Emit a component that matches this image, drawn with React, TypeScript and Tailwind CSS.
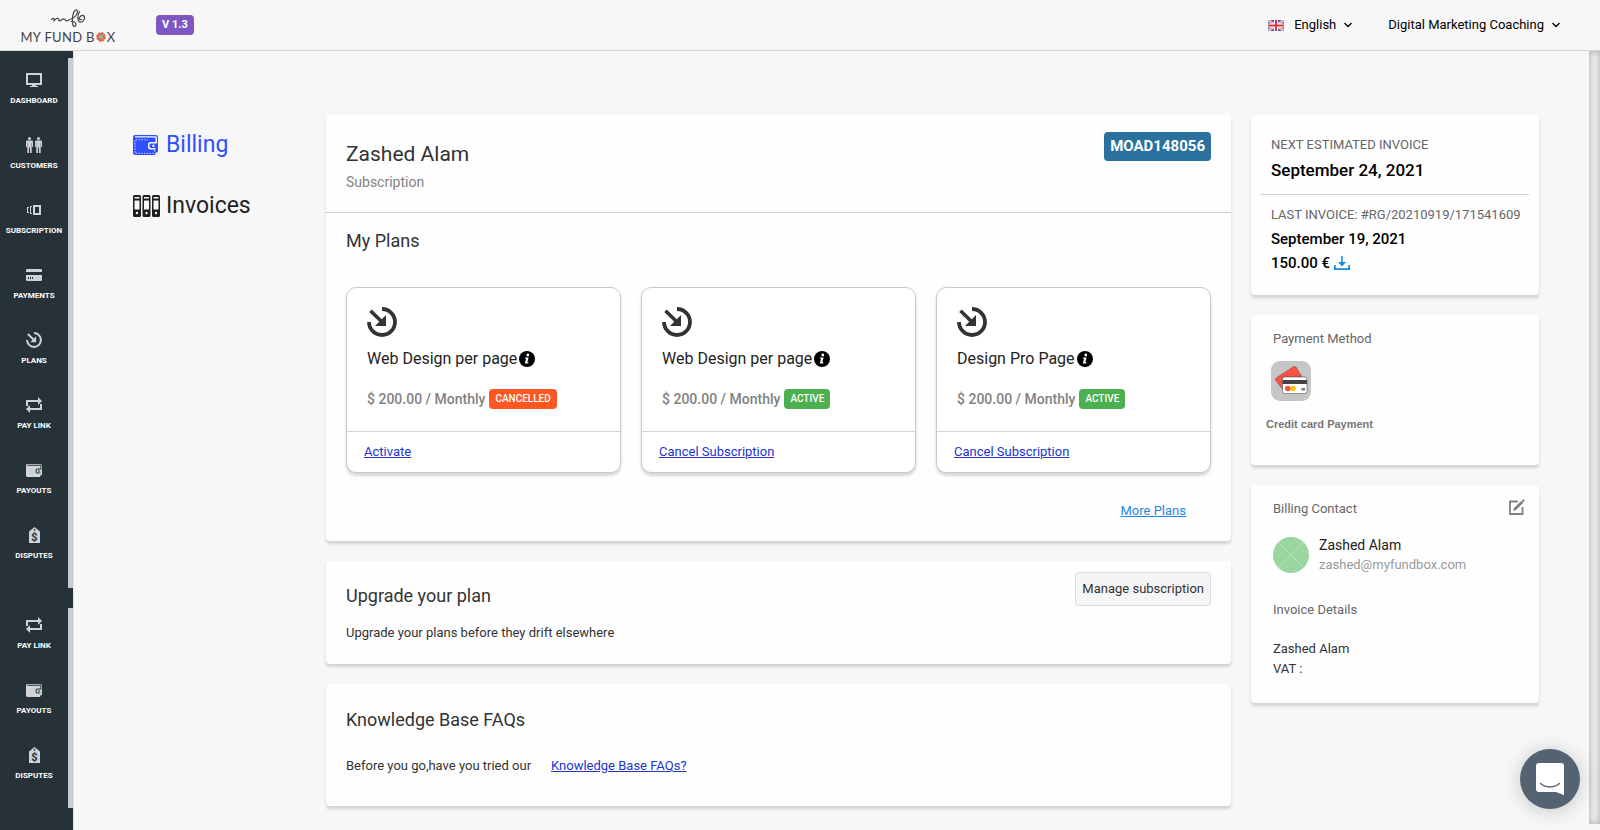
import type { ReactNode } from "react";
import clsx from "clsx";

type IconProps = { className?: string };

function MonitorIcon({ className }: IconProps) {
  return (
    <svg viewBox="0 0 16 14" className={className} fill="currentColor" aria-hidden="true">
      <path fillRule="evenodd" d="M0 0h16v12h-6v1h2v1H4v-1h2v-1H0V0Zm2 2v8h12V2H2Z" />
    </svg>
  );
}

function PeopleIcon({ className }: IconProps) {
  return (
    <svg viewBox="0 0 16 16" className={className} fill="currentColor" aria-hidden="true">
      <circle cx="3.5" cy="1.5" r="1.5" />
      <circle cx="12.5" cy="1.5" r="1.5" />
      <path d="M1.200 3.600h4.600A1.200 1.200 0 0 1 7 4.800V10H6V6h-.3v10H4v-5.500H3V16H1.300V6H1v4H0V4.800a1.200 1.200 0 0 1 1.200-1.200Z" />
      <path d="M10.200 3.600h4.600A1.200 1.200 0 0 1 16 4.800V10h-1V6h-.3v10H13v-5.500h-1V16h-1.700V6H10v4H9V4.800a1.200 1.200 0 0 1 1.200-1.200Z" />
    </svg>
  );
}

function StackIcon({ className }: IconProps) {
  return (
    <svg viewBox="0 0 14 10" className={className} fill="currentColor" aria-hidden="true">
      <path fillRule="evenodd" d="M6 0h8v10H6V0Zm2 2v6h4V2H8Z" />
      <path d="M3 1h2v1H4v6h1v1H3V1ZM0 2h2v1H1v4h1v1H0V2Z" />
    </svg>
  );
}

function CardIcon({ className }: IconProps) {
  return (
    <svg viewBox="0 0 16 12" className={className} fill="currentColor" aria-hidden="true">
      <path d="M1.200 0h13.600A1.200 1.200 0 0 1 16 1.200V3H0V1.200A1.200 1.200 0 0 1 1.200 0Z" />
      <path
        fillRule="evenodd"
        d="M0 6h16v4.800a1.200 1.200 0 0 1-1.200 1.200H1.200A1.200 1.200 0 0 1 0 10.800V6Zm2 2v2h1V8H2Zm2 0v2h1V8H4Zm2 0v2h1V8H6Z"
      />
    </svg>
  );
}

function PlanIcon({ className }: IconProps) {
  return (
    <svg viewBox="0 0 30 30" className={className} aria-hidden="true">
      <path d="M15 2a13 13 0 1 1-13 13" fill="none" stroke="currentColor" strokeWidth="3.800" />
      <path d="M3.500 3.700 14 14" fill="none" stroke="currentColor" strokeWidth="3.600" />
      <path d="M19 8v11H8L19 8Z" fill="currentColor" />
    </svg>
  );
}

function LoopIcon({ className }: IconProps) {
  return (
    <svg viewBox="0 0 16 16" className={className} fill="currentColor" aria-hidden="true">
      <path d="M0 9V3h12V0l4 4-4 4V5H2v4H0Z" />
      <path d="M16 7v6H4v3l-4-4 4-4v3h10V7h2Z" />
    </svg>
  );
}

function WalletIcon({ className }: IconProps) {
  return (
    <svg viewBox="0 0 25 20" className={className} aria-hidden="true">
      <path
        fill="currentColor"
        fillRule="evenodd"
        d="M2 0h20.500A2.500 2.500 0 0 1 25 2.500V16a1.500 1.500 0 0 1-1.500 1.500H22.500v1A1.500 1.500 0 0 1 21 20H2a2 2 0 0 1-2-2V2a2 2 0 0 1 2-2Zm0 1.200v1.300h20.500V7H24V2.700a1.500 1.500 0 0 0-1.500-1.500H2Zm15.500 5.800a2.500 2.500 0 0 0-2.500 2.500v2.500a2.500 2.500 0 0 0 2.500 2.500h5v-1.500h-4.600a1.400 1.400 0 0 1-1.400-1.400V9.900a1.400 1.400 0 0 1 1.400-1.400H24V7h-6.500Zm1.800 2.800v2h2.200v-2h-2.200Z"
      />
      <path
        d="M2 5v13.300h19M3 4.800h12M21.500 15v2.500"
        fill="none"
        stroke="white"
        strokeOpacity=".75"
        strokeWidth="1"
        strokeDasharray="1.500 1.300"
      />
    </svg>
  );
}

function BindersIcon({ className }: IconProps) {
  return (
    <svg viewBox="0 0 27 22" className={className} fill="currentColor" aria-hidden="true">
      {[0, 9.5, 19].map((x) => (
        <path
          key={x}
          transform={`translate(${x} 0)`}
          fillRule="evenodd"
          d="M1.500 0h5A1.500 1.500 0 0 1 8 1.500v19A1.500 1.500 0 0 1 6.500 22h-5A1.500 1.500 0 0 1 0 20.500v-19A1.500 1.500 0 0 1 1.500 0ZM1.500 2v1.500h5V2h-5ZM1.500 5.500v9h5v-9h-5ZM4 16.800a1.200 1.200 0 1 0 0 2.400 1.200 1.200 0 0 0 0-2.400Z"
        />
      ))}
    </svg>
  );
}

function TagIcon({ className }: IconProps) {
  return (
    <svg viewBox="0 0 11 16" className={className} aria-hidden="true">
      <path fill="currentColor" fillRule="evenodd" d="M5.500 0 11 4.500V16H0V4.500L5.500 0Zm0 1.800a.9.9 0 1 0 0 1.800.9.9 0 0 0 0-1.800Z" />
      <text x="5.500" y="14" textAnchor="middle" fontSize="11" fontWeight="700" fill="#263238" fontFamily="Roboto, sans-serif">
        $
      </text>
    </svg>
  );
}

function InfoIcon({ className }: IconProps) {
  return (
    <svg viewBox="0 0 16 16" className={className} aria-hidden="true">
      <circle cx="8" cy="8" r="8" fill="black" />
      <circle cx="8.800" cy="4" r="1.400" fill="white" />
      <path d="M6 6.400h3.600L8.300 11.300h1.200l-.3 1.200H5.800L7.100 7.600H5.700L6 6.400Z" fill="white" />
    </svg>
  );
}

function DownloadIcon({ className }: IconProps) {
  return (
    <svg viewBox="0 0 16 14" className={className} fill="currentColor" aria-hidden="true">
      <path d="M7.200 0h1.600v6H12l-4 4.500L4 6h3.200V0Z" />
      <path d="M0 9h1.700v3.300h12.600V9H16v5H0V9Z" />
    </svg>
  );
}

function EditIcon({ className }: IconProps) {
  return (
    <svg viewBox="0 0 16 16" className={className} aria-hidden="true">
      <path d="M9 2.500H1V15h12.500V8" fill="none" stroke="currentColor" strokeWidth="1.800" />
      <path d="M14 0 16 2 14.800 3.200l-2-2L14 0ZM12.300 1.700l2 2-7.300 7.300-3 1 1-3 7.300-7.300Z" fill="currentColor" />
    </svg>
  );
}

function ChevronIcon() {
  return (
    <svg viewBox="0 0 8 6" className="h-1.5 w-2" fill="none" stroke="currentColor" strokeWidth="1.300" aria-hidden="true">
      <path d="M.5 1 4 4.500 7.500 1" />
    </svg>
  );
}

function FlagIcon() {
  return (
    <svg viewBox="0 0 16 11" className="h-[11px] w-4" aria-hidden="true">
      <rect width="16" height="11" fill="#4058a8" />
      <path d="M0 0 16 11M16 0 0 11" stroke="#f5e9ee" strokeWidth="2.400" />
      <path d="M0 0 16 11M16 0 0 11" stroke="#e0696f" strokeWidth=".9" />
      <path d="M8 0v11M0 5.500h16" stroke="white" strokeWidth="4" />
      <path d="M8 0v11M0 5.500h16" stroke="#e0343c" strokeWidth="2" />
    </svg>
  );
}

function Logo() {
  return (
    <a href="#" className="flex w-24 flex-col items-center pt-1.5 text-[#444]" aria-label="My Fund Box">
      <svg viewBox="0 0 34 18" className="h-[18px] w-[34px]" fill="none" stroke="currentColor" strokeWidth="1.200" strokeLinecap="round" aria-hidden="true">
        <path d="M.7 10.500c2-2 3-1 2 2 1-2.500 4-4 5-2.500.7 1-.3 2 .7 2 1.500 0 3-2.500 5-2 1.500.5.5 2 2 2s2.500-1.500 4.500-2c4-1 7-5 6.500-8-.5-2-3-1-4 2-1 4-1.500 8-.5 12 .7 2.500 3.500 1.500 3-1-.5-2-3.500-3-5-2.500" />
        <path d="M28.500 2.500c-2 3.500-2.500 9 0 10.500 2.500 1 5-2 5-4.500s-3-3-5 0c-.8 1.500.5 2.500 2 2" />
      </svg>
      <span className="flex items-center whitespace-nowrap font-[Lato] text-[13px] leading-5 tracking-wide">
        MY FUND B
        <svg viewBox="0 0 10 10" className="mx-px size-2.5" aria-hidden="true">
          <circle cx="5" cy="5" r="3.500" fill="#9bb58a" stroke="#e85546" strokeWidth="2.400" strokeDasharray="2.200 .5" />
        </svg>
        X
      </span>
    </a>
  );
}

type NavItem = { label: string; icon: ReactNode };

const payLink: NavItem = { label: "Pay Link", icon: <LoopIcon className="size-4" /> };
const payouts: NavItem = { label: "Payouts", icon: <WalletIcon className="h-[13px] w-4" /> };
const disputes: NavItem = { label: "Disputes", icon: <TagIcon className="h-4 w-[11px]" /> };

const mainNav: NavItem[] = [
  { label: "Dashboard", icon: <MonitorIcon className="h-3.5 w-4" /> },
  { label: "Customers", icon: <PeopleIcon className="size-4" /> },
  { label: "Subscription", icon: <StackIcon className="h-2.5 w-3.5" /> },
  { label: "Payments", icon: <CardIcon className="h-3 w-4" /> },
  { label: "Plans", icon: <PlanIcon className="size-4" /> },
  payLink,
  payouts,
  disputes,
];

const extraNav: NavItem[] = [payLink, payouts, disputes];

function SideNav({ items, label, className }: { items: NavItem[]; label: string; className?: string }) {
  return (
    <nav aria-label={label} className={clsx("flex", className)}>
      <ul className="w-[68px]">
        {items.map((item) => (
          <li key={item.label} className="h-[65px]">
            <a href="#" className="flex flex-col items-center gap-[5px] pt-[7px] text-[#cfd2d4]">
              <span className="flex h-5 items-center">{item.icon}</span>
              <span className="text-[8px] font-bold uppercase leading-3 text-white">{item.label}</span>
            </a>
          </li>
        ))}
      </ul>
      <div className="flex-1 bg-[#d0d0d0] shadow-[inset_0_0_3px_#bbb]" />
    </nav>
  );
}

function Card({ children, className }: { children: ReactNode; className?: string }) {
  return (
    <section className={clsx("rounded-sm bg-[#fefefe] shadow-[0_3px_3px_rgba(0,0,0,0.15)]", className)}>{children}</section>
  );
}

type Plan = { id: number; name: string; status: "Cancelled" | "Active"; action: string };

const plans: Plan[] = [
  { id: 1, name: "Web Design per page", status: "Cancelled", action: "Activate" },
  { id: 2, name: "Web Design per page", status: "Active", action: "Cancel Subscription" },
  { id: 3, name: "Design Pro Page", status: "Active", action: "Cancel Subscription" },
];

function PlanCard({ plan }: { plan: Plan }) {
  return (
    <article className="rounded-[10px] border border-[#c8c8c8] bg-white shadow-[0_3px_3px_rgba(0,0,0,0.15)]">
      <div className="border-b border-[#d5d5d5] px-5 pb-5 pt-[19px]">
        <PlanIcon className="size-[30px] text-[#333]" />
        <h3 className="mt-2.5 flex items-center gap-0.5 text-base leading-6 text-[#222]">
          {plan.name}
          <InfoIcon className="size-4" />
        </h3>
        <p className="mt-4 flex items-center gap-1 text-sm leading-6 font-medium text-[#828282]">
          $ 200.00 / Monthly
          <span
            className={clsx(
              "rounded-sm px-1.5 text-[10px] font-medium uppercase leading-5 text-white",
              plan.status === "Active" ? "bg-[#4caf50]" : "bg-[#ff5722]"
            )}
          >
            {plan.status}
          </span>
        </p>
      </div>
      <div className="px-[17px] py-2.5 text-[13px] leading-5">
        <a href="#" className="text-[#2234cc] underline">
          {plan.action}
        </a>
      </div>
    </article>
  );
}

export default function App() {
  return (
    <div className="flex min-h-screen flex-col bg-[#f7f7f7] font-[Roboto,sans-serif] text-[13px] leading-5 text-[#333]">
      <header className="flex h-[51px] items-center border-b border-[#d5d5d5] pl-5 pr-10 text-black">
        <Logo />
        <span className="ml-10 rounded-sm bg-[#7e57c2] px-1.5 text-[11px] font-bold leading-5 text-white">V 1.3</span>
        <div className="ml-auto flex items-center gap-9">
          <button type="button" className="flex items-center gap-2">
            <FlagIcon />
            <span className="ml-0.5">English</span>
            <ChevronIcon />
          </button>
          <button type="button" className="flex items-center gap-2">
            Digital Marketing Coaching
            <ChevronIcon />
          </button>
        </div>
      </header>

      <div className="flex flex-1">
        <aside className="w-[73px] shrink-0 bg-[#263238] pt-[7px]">
          <SideNav items={mainNav} label="Main" className="h-[530px] [&>ul]:pt-[5px]" />
          <SideNav items={extraNav} label="More" className="mt-5 h-[200px]" />
        </aside>

        <main className="flex flex-1 items-start border-l border-[#e3e3e3] pb-6 pl-[59px] pr-[50px] pt-16">
          <nav aria-label="Account" className="flex w-[193px] shrink-0 flex-col gap-[29px] pt-3.5 text-[23px] leading-8">
            <a href="#" className="flex items-center gap-2 text-[#304ffe]">
              <WalletIcon className="h-5 w-[25px]" />
              Billing
            </a>
            <a href="#" className="flex items-center gap-1.5 text-[#1f1f1f]">
              <BindersIcon className="h-[22px] w-[27px]" />
              Invoices
            </a>
          </nav>

          <div className="flex min-w-0 flex-1 flex-col gap-5">
            <Card>
              <div className="flex items-start justify-between border-b border-[#ccc] px-5 pb-3.5 pt-[17px]">
                <div className="pt-1.5">
                  <h1 className="text-[21px] leading-8">Zashed Alam</h1>
                  <p className="pb-1 text-sm leading-6 text-[#828282]">Subscription</p>
                </div>
                <span className="rounded-sm bg-[#2a719e] px-1.5 text-[15px] font-bold leading-[29px] text-white">MOAD148056</span>
              </div>
              <div className="px-5 pb-5 pt-4">
                <h2 className="text-lg leading-6">My Plans</h2>
                <div className="mt-[34px] grid grid-cols-3 gap-5">
                  {plans.map((plan) => (
                    <PlanCard key={plan.id} plan={plan} />
                  ))}
                </div>
                <div className="mt-7 pr-[25px] text-right">
                  <a href="#" className="text-[#1e88e5] underline">
                    More Plans
                  </a>
                </div>
              </div>
            </Card>

            <Card className="flex items-start justify-between px-5 pb-[21px] pt-[11px]">
              <div className="pt-3">
                <h2 className="text-lg leading-6">Upgrade your plan</h2>
                <p className="mt-[15px]">Upgrade your plans before they drift elsewhere</p>
              </div>
              <button type="button" className="h-[34px] rounded-sm border border-[#ddd] bg-[#f5f5f5] px-1.5">
                Manage subscription
              </button>
            </Card>

            <Card className="px-5 pb-[30px] pt-6">
              <h2 className="text-lg leading-6">Knowledge Base FAQs</h2>
              <div className="mt-6 flex gap-5">
                <p>Before you go,have you tried our</p>
                <a href="#" className="text-[#2234cc] underline">
                  Knowledge Base FAQs?
                </a>
              </div>
            </Card>
          </div>

          <aside className="ml-5 flex w-72 shrink-0 flex-col gap-5">
            <Card className="px-2.5 pb-5 pt-5 text-black">
              <div className="border-b border-[#ccc] px-2.5 pb-3">
                <p className="text-[#666]">NEXT ESTIMATED INVOICE</p>
                <p className="mt-[3px] text-[17px] font-medium leading-6">September 24, 2021</p>
              </div>
              <div className="px-2.5 pt-2.5">
                <p className="whitespace-nowrap text-[#666]">LAST INVOICE: #RG/20210919/171541609</p>
                <p className="mt-0.5 text-[15px] font-medium leading-6">September 19, 2021</p>
                <p className="flex items-center gap-1 text-[15px] font-medium leading-6">
                  150.00 €
                  <button type="button" aria-label="Download invoice" className="text-[#1e88e5]">
                    <DownloadIcon className="h-3.5 w-4" />
                  </button>
                </p>
              </div>
            </Card>

            <Card className="px-5 pb-[31px] pt-3.5 text-[#666]">
              <h2 className="pl-0.5">Payment Method</h2>
              <svg viewBox="0 0 40 40" className="mt-3 size-10" aria-hidden="true">
                <rect width="40" height="40" rx="9" fill="#c6c6c6" />
                <path d="M5 17 22 6q2-1 3 0l6 10H13l-1 13L4.500 19Z" fill="#fb5144" stroke="#8b4a45" strokeWidth=".6" />
                <rect x="11.500" y="16" width="24.500" height="16.500" rx="2" fill="white" stroke="#666" strokeWidth=".7" />
                <path d="M11.500 19h24.500v4H11.500z" fill="#444" />
                <circle cx="22" cy="27.500" r="2.800" fill="#ffc800" />
                <circle cx="16.700" cy="27.500" r="2.800" fill="#fb5144" />
                <rect x="30.500" y="27" width="3.500" height="2.500" fill="#777" />
              </svg>
              <p className="-ml-[5px] mt-[13px] font-['Liberation_Sans'] text-[11px] font-bold text-[#777]">Credit card Payment</p>
            </Card>

            <Card className="px-[22px] pb-6 pt-3.5">
              <div className="flex items-start justify-between text-[#666]">
                <h2>Billing Contact</h2>
                <button type="button" aria-label="Edit billing contact" className="-mr-2 text-[#808080]">
                  <EditIcon className="size-4" />
                </button>
              </div>
              <div className="mt-4 flex items-center gap-2.5">
                <svg viewBox="0 0 36 36" className="size-9" aria-hidden="true">
                  <circle cx="18" cy="18" r="18" fill="#9bd5a0" />
                  <path d="M5.300 5.300 30.700 30.700M30.700 5.300 5.300 30.700" stroke="#c3e6c5" strokeWidth=".8" />
                </svg>
                <div>
                  <p className="text-sm leading-5 text-[#222]">Zashed Alam</p>
                  <p className="text-[#999]">zashed@myfundbox.com</p>
                </div>
              </div>
              <p className="mt-[25px] text-[#666]">Invoice Details</p>
              <p className="mt-[19px]">Zashed Alam</p>
              <p>VAT :</p>
            </Card>
          </aside>
        </main>

        <div className="mb-1.5 w-[11px] shrink-0 bg-[#ececec] shadow-[inset_0_0_6px_rgba(0,0,0,0.3)]" />
      </div>

      <button
        type="button"
        aria-label="Open chat"
        className="fixed bottom-[21px] right-5 flex size-[60px] items-center justify-center rounded-full bg-[#546371] shadow-[0_2px_20px_rgba(0,0,0,0.2)]"
      >
        <svg viewBox="0 0 28 32" className="h-8 w-7" aria-hidden="true">
          <path d="M3 0h22a3 3 0 0 1 3 3v29s-4.500-1.500-8-3H3a3 3 0 0 1-3-3V3a3 3 0 0 1 3-3Z" fill="white" />
          <path d="M4.500 20.500c5.500 4.500 13.500 4.500 19 0" fill="none" stroke="#546371" strokeWidth="1.500" strokeLinecap="round" />
        </svg>
      </button>
    </div>
  );
}
